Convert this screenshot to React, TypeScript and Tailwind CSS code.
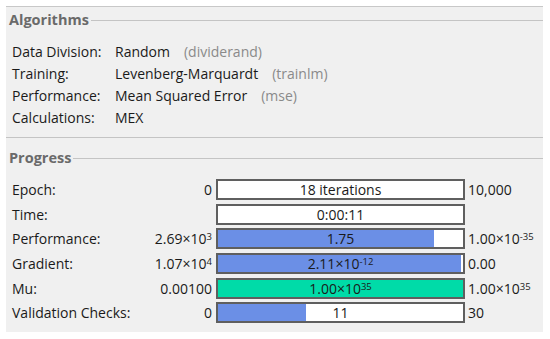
import React from 'react';

const font = { fontFamily: '"Open Sans", "Noto Sans", Arial, sans-serif' };

function Sup({ base, exp }: { base: string; exp: string }) {
  return (
    <span>
      {base}×10<sup className="text-[9.5px] relative -top-[4px] align-baseline">{exp}</sup>
    </span>
  );
}

function Bar({ fill, color, children }: { fill: number; color?: string; children: React.ReactNode }) {
  return (
    <div className="relative h-[21px] w-[249px] border-2 border-[#5f5f5f] bg-white">
      {fill > 0 && (
        <div className={`absolute left-0 top-0 bottom-0 ${color ?? 'bg-[#6b8fe6]'}`} style={{ width: `${fill}%` }} />
      )}
      <div className="relative flex h-full items-center justify-center text-[14px] text-[#1a1a1a]">{children}</div>
    </div>
  );
}

function SectionTitle({ title }: { title: string }) {
  return (
    <div className="flex items-center h-[20px]">
      <span className="text-[14.5px] font-bold text-[#6a6a6a] pl-[3px] pr-[2px]">{title}</span>
      <div className="flex-1 h-px bg-[#c4c4c4]" />
    </div>
  );
}

export default function App() {
  const algo = [
    ['Data Division:', 'Random', '(dividerand)'],
    ['Training:', 'Levenberg-Marquardt', '(trainlm)'],
    ['Performance:', 'Mean Squared Error', '(mse)'],
    ['Calculations:', 'MEX', ''],
  ];

  const rows: { label: string; left: React.ReactNode; bar: React.ReactNode; fill: number; color?: string; right: React.ReactNode }[] = [
    { label: 'Epoch:', left: '0', bar: '18 iterations', fill: 0, right: '10,000' },
    { label: 'Time:', left: '', bar: '0:00:11', fill: 0, right: '' },
    { label: 'Performance:', left: <Sup base="2.69" exp="3" />, bar: '1.75', fill: 88, right: <Sup base="1.00" exp="-35" /> },
    { label: 'Gradient:', left: <Sup base="1.07" exp="4" />, bar: <Sup base="2.11" exp="-12" />, fill: 99, right: '0.00' },
    { label: 'Mu:', left: '0.00100', bar: <Sup base="1.00" exp="35" />, fill: 100, color: 'bg-[#00dba8]', right: <Sup base="1.00" exp="35" /> },
    { label: 'Validation Checks:', left: '0', bar: '11', fill: 36, right: '30' },
  ];

  return (
    <div className="w-[550px] h-[339px] bg-white pt-[6px] pl-[6px]" style={font}>
      <div className="w-[537px] h-[326px] bg-[#f0f0f0] border-t border-[#c8c8c8] text-[#1a1a1a]">
        {/* Algorithms */}
        <div className="border-b border-[#c4c4c4] h-[131px] pt-[3px]">
          <SectionTitle title="Algorithms" />
          <div className="pl-[6px] pt-[10px] text-[14px]">
            {algo.map(([k, v, f]) => (
              <div key={k} className="flex h-[22px] items-center">
                <span className="w-[103px]">{k}</span>
                <span>{v}</span>
                {f && <span className="ml-[14px] text-[#8a8a8a]">{f}</span>}
              </div>
            ))}
          </div>
        </div>

        {/* Progress */}
        <div className="pt-[10px]">
          <SectionTitle title="Progress" />
          <div className="pl-[6px] pt-[9px] text-[14px]">
            {rows.map((r) => (
              <div key={r.label} className="flex items-center h-[24.7px]">
                <span className="w-[140px]">{r.label}</span>
                <span className="w-[64px] text-right pr-[4px]">{r.left}</span>
                <Bar fill={r.fill} color={r.color}>{r.bar}</Bar>
                <span className="pl-[3px]">{r.right}</span>
              </div>
            ))}
          </div>
        </div>
      </div>
    </div>
  );
}
